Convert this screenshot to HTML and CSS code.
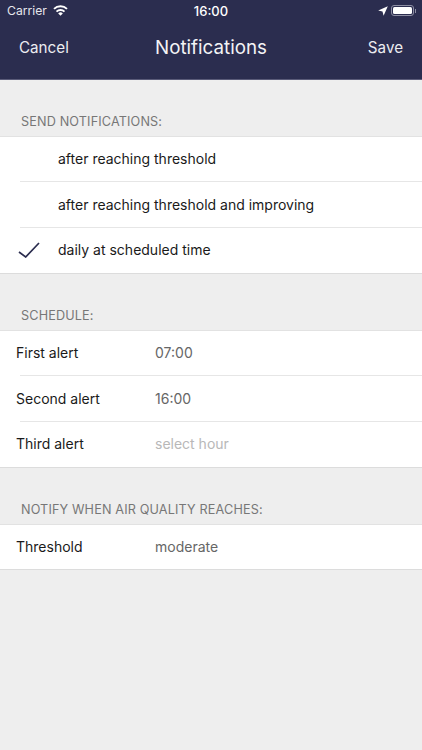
FILE: index.html
```html
<!DOCTYPE html>
<html lang="en">
<head>
<meta charset="utf-8">
<title>Notifications</title>
<link rel="stylesheet" href="styles.css">
</head>
<body>
<div class="screen">
  <header class="header">
    <div class="status">
      <div class="status-left">
        <span>Carrier</span>
        <svg class="wifi" width="15" height="11" viewBox="0 0 15 11"><path d="M1 3.9a9.3 9.3 0 0 1 13 0" fill="none" stroke="#fff" stroke-width="1.9"/><path d="M3.5 6.6a5.8 5.8 0 0 1 8 0" fill="none" stroke="#fff" stroke-width="1.9"/><path d="M7.5 10.8 5.2 8.4a3.3 3.3 0 0 1 4.6 0Z" fill="#fff"/></svg>
      </div>
      <span class="time">16:00</span>
      <div class="status-right">
        <svg class="arrow" width="10" height="10" viewBox="0 0 10 10"><path d="M9.8.2 5.6 9.8 4.5 5.5.2 4.4Z" fill="#fff"/></svg>
        <div class="battery"><div class="battery-fill"></div></div>
        <div class="battery-cap"></div>
      </div>
    </div>
    <nav class="nav">
      <span class="nav-btn">Cancel</span>
      <span class="nav-title">Notifications</span>
      <span class="nav-btn">Save</span>
    </nav>
  </header>

  <h2 class="section-label first">SEND NOTIFICATIONS:</h2>
  <ul class="group">
    <li class="row option"><span class="check"></span><span>after reaching threshold</span></li>
    <li class="row option"><span class="check"></span><span>after reaching threshold and improving</span></li>
    <li class="row option"><span class="check"><svg class="tick" width="22" height="16" viewBox="0 0 22 16"><path d="M1 10 7.7 15 21 1" fill="none" stroke="#2b2d4f" stroke-width="1.7"/></svg></span><span>daily at scheduled time</span></li>
  </ul>

  <h2 class="section-label">SCHEDULE:</h2>
  <ul class="group">
    <li class="row field"><span class="key">First alert</span><span class="value">07:00</span></li>
    <li class="row field"><span class="key">Second alert</span><span class="value">16:00</span></li>
    <li class="row field"><span class="key">Third alert</span><span class="value placeholder">select hour</span></li>
  </ul>

  <h2 class="section-label">NOTIFY WHEN AIR QUALITY REACHES:</h2>
  <ul class="group">
    <li class="row field"><span class="key">Threshold</span><span class="value">moderate</span></li>
  </ul>
</div>
</body>
</html>
```
FILE: styles.css
```css
* { box-sizing: border-box; }
html, body { margin: 0; padding: 0; }
body { font-family: Inter, "Liberation Sans", sans-serif; color: #111; background: #eeeeee; }
.screen { width: 422px; height: 750px; overflow: hidden; background: #eeeeee; }

.header { height: 80px; background: #2b2d4f; color: #fff; border-bottom: 1px solid #5a5b79; }
.status { height: 21px; padding: 0 6px 0 7px; display: flex; align-items: center; justify-content: space-between; position: relative; font-size: 12.2px; }
.status-left { display: flex; align-items: center; gap: 6px; color: #e6e6ec; }
.wifi { margin-top: -1px; }
.time { position: absolute; left: 0; right: 0; text-align: center; font-weight: 500; font-size: 13px; }
.status-right { display: flex; align-items: center; }
.arrow { margin-right: 3px; margin-left: -1px; }
.battery { width: 23px; height: 11px; border: 1px solid #8d8ea3; border-radius: 3px; padding: 1px; }
.battery-fill { height: 100%; background: #fff; border-radius: 1.5px; }
.battery-cap { width: 1px; height: 4px; background: #8d8ea3; margin-left: 1px; }

.nav { height: 52px; padding: 0 19px; display: flex; align-items: center; justify-content: space-between; position: relative; }
.nav-btn { font-size: 15.2px; color: #ececf0; }
.nav-title { position: absolute; left: 0; right: 0; text-align: center; font-size: 18.8px; color: #f4f4f6; }

.section-label { margin: 0; padding: 0 21px 6px; height: 57.2px; display: flex; align-items: flex-end; font-size: 12.65px; font-weight: 400; line-height: 17px; color: #777; letter-spacing: .15px; }
.section-label.first { height: 55.75px; }

.group { list-style: none; margin: 0; padding: 0; background: #fff; position: relative; }
.group::before, .group::after { content: ""; position: absolute; left: 0; right: 0; height: 1px; background: #e2e2e2; z-index: 1; }
.group::before { top: 0; }
.group::after { bottom: -1px; background: #dcdcdc; }
.row { height: 45.6px; display: flex; align-items: center; font-size: 14px; color: #1a1a1a; position: relative; }
.row + .row::before { content: ""; position: absolute; top: 0; left: 20px; right: 0; height: 1px; background: #e6e6e6; }
.check { width: 58px; padding-left: 18px; display: flex; align-items: center; flex: none; }
.field { padding-left: 16px; }
.key { width: 139px; flex: none; }
.value { color: #666; }
.placeholder { color: #b8b8b8; }
```
